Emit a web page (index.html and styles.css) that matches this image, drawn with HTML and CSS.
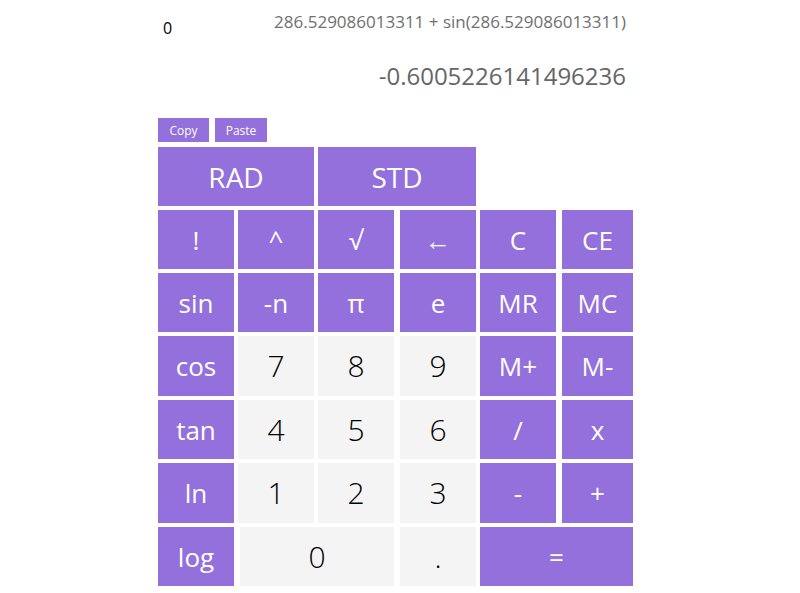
FILE: index.html
```html
<!DOCTYPE html>
<html lang="en">
<head>
<meta charset="utf-8">
<title>Calculator</title>
<link rel="stylesheet" href="styles.css">
</head>
<body>
<div class="calc">
  <div class="display">
    <div class="memory">0</div>
    <div class="expression">286.529086013311 + sin(286.529086013311)</div>
  </div>
  <div class="result">-0.6005226141496236</div>
  <div class="clip">
    <button class="small">Copy</button>
    <button class="small">Paste</button>
  </div>
  <div class="keys">
    <button class="key mode span2">RAD</button>
    <button class="key mode span2">STD</button>
    <div class="spacer"></div>

    <button class="key">!</button>
    <button class="key">^</button>
    <button class="key">√</button>
    <button class="key c4">←</button>
    <button class="key c5">C</button>
    <button class="key">CE</button>

    <button class="key">sin</button>
    <button class="key">-n</button>
    <button class="key">π</button>
    <button class="key c4">e</button>
    <button class="key c5">MR</button>
    <button class="key">MC</button>

    <button class="key">cos</button>
    <button class="key num">7</button>
    <button class="key num">8</button>
    <button class="key num c4">9</button>
    <button class="key c5">M+</button>
    <button class="key">M-</button>

    <button class="key">tan</button>
    <button class="key num">4</button>
    <button class="key num">5</button>
    <button class="key num c4">6</button>
    <button class="key c5">/</button>
    <button class="key">x</button>

    <button class="key">ln</button>
    <button class="key num">1</button>
    <button class="key num">2</button>
    <button class="key num c4">3</button>
    <button class="key c5">-</button>
    <button class="key">+</button>

    <button class="key">log</button>
    <button class="key num span2 zero">0</button>
    <button class="key num c4 dot">.</button>
    <button class="key span2">=</button>
  </div>
</div>
</body>
</html>
```
FILE: styles.css
```css
html, body {
  margin: 0;
  padding: 0;
  background: #ffffff;
}

body {
  font-family: "Open Sans", "Noto Sans", sans-serif;
}

.calc {
  width: 484px;
  margin: 0 auto;
}

.display {
  display: flex;
  justify-content: space-between;
  align-items: flex-start;
  padding: 11px 16px 0 5px;
  height: 34px;
}

.memory {
  font-size: 16px;
  line-height: 22px;
  color: #000;
  padding-top: 6px;
}

.expression {
  font-size: 17px;
  line-height: 22px;
  color: #707070;
}

.result {
  text-align: right;
  padding-right: 16px;
  padding-top: 14px;
  font-size: 24px;
  line-height: 34px;
  height: 73px;
  color: #666666;
  box-sizing: border-box;
}

.clip {
  display: flex;
  gap: 6px;
  height: 24px;
}

button {
  font-family: inherit;
  border: none;
  margin: 0;
  padding: 0;
  cursor: pointer;
}

.small {
  background: #9370db;
  color: #fff;
  font-size: 12px;
  height: 24px;
  width: 51px;
}

.small + .small {
  width: 52px;
}

.keys {
  margin-top: 5px;
  display: grid;
  grid-template-columns: 76px 76px 76px 78px 78px 71px;
  grid-template-rows: 59px 59px 59px 60px 59px 60px 59px;
  column-gap: 4px;
  row-gap: 4px;
  width: 475px;
}

.key {
  background: #9370db;
  color: #ffffff;
  font-size: 26px;
  line-height: 1;
}

.mode {
  font-size: 28px;
}

.span2 {
  grid-column: span 2;
}

.spacer {
  grid-column: span 2;
}

.c4 {
  margin-left: 2px;
}

.c5 {
  margin-right: 2px;
}

.num {
  background: #f4f4f4;
  color: #000;
  font-weight: 300;
  font-size: 30px;
}

.zero {
  margin-left: 2px;
}
```
